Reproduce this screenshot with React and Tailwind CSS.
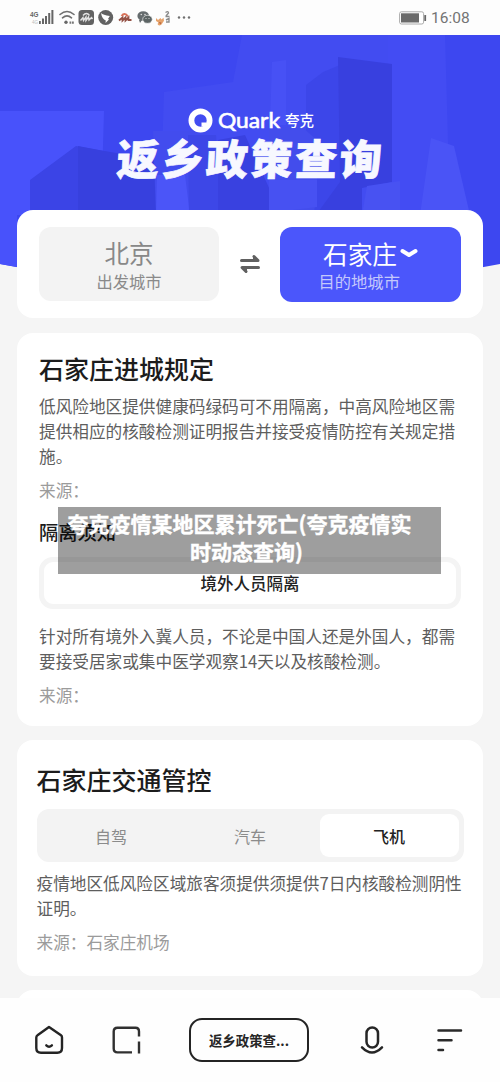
import React from "react";

const cjk = "font-['Noto_Sans_CJK_SC',sans-serif]";

function StatusBar() {
  return (
    <header className="flex h-[35px] shrink-0 items-center justify-between bg-[#fdfdfd] pl-[29px] pr-[31px]">
      <svg width="164" height="20" viewBox="29 8 164 20" className="block">
        <text x="30" y="16.500" fontSize="8" fontWeight="700" fill="#666" fontFamily="Liberation Sans" textLength="8.500" lengthAdjust="spacingAndGlyphs">4G</text>
        <text x="32" y="23.500" fontSize="4.500" fill="#bbb" fontFamily="Liberation Sans">4G</text>
        <g fill="#666">
          <rect x="39" y="21" width="1.8" height="3" />
          <rect x="42" y="18.5" width="2" height="5.5" />
          <rect x="45" y="16" width="2" height="8" />
          <rect x="48.2" y="13" width="2" height="11" />
          <rect x="51.4" y="10" width="2" height="14" />
        </g>
        <g fill="none" stroke="#707070" strokeWidth="1.6" strokeLinecap="round">
          <path d="M60 14.5q7-6 14 0" />
          <path d="M62.5 17.8q4.500-4 9 0" />
        </g>
        <circle cx="66" cy="22.200" r="1.700" fill="#666" />
        <path d="M69.500 22.700h5" stroke="#777" strokeWidth="2.200" strokeDasharray="1.800 .7" />
        <rect x="78.500" y="10" width="15.500" height="15" rx="3.500" fill="#626262" />
        <path d="M80.500 20.500l2.500-3 .5 3 2.500-3.500v3.500l2.500-3.500.5 3 2.500-2.500 1 1.500M83 15.500q3.500-4 6.500 0" fill="none" stroke="#e4e4e4" strokeWidth="1.400" />
        <circle cx="105.700" cy="17.500" r="7.500" fill="#626262" />
        <path d="M101 13q2 2 8.800 3l-1.800 3 1 .5-3.500 3.500.3-2.500q-3.800-1.500-4.800-7.500z" fill="#fff" />
        <path d="M121.500 16q3-4 6.500.3" fill="none" stroke="#d9735a" strokeWidth="2" />
        <path d="M119 20.500l3.500-3v3l3-3v3l3-3v2.500h3" fill="none" stroke="#935044" strokeWidth="1.800" />
        <ellipse cx="143.200" cy="16" rx="5.800" ry="4.800" fill="#666c6e" />
        <ellipse cx="147.500" cy="19.300" rx="4.800" ry="4" fill="#5c6464" stroke="#fff" strokeWidth=".6" />
        <path d="M140 23l2-3h-3z" fill="#666c6e" />
        <g fill="#ddd"><circle cx="141.300" cy="14.500" r=".8" /><circle cx="145" cy="14.500" r=".8" /><circle cx="146" cy="18.500" r=".6" /><circle cx="149" cy="18.500" r=".6" /></g>
        <path d="M156 18l2 2 2.500-2 1 1.500 2-1.700.5 3-2.500 3.700q-3 2-4-.5l1-1.500-2.500-1.500z" fill="#e6a36c" />
        <path d="M158.500 22l3 .5-1 2z" fill="#b9683f" />
        <path d="M165.500 12.500q3-2 3 .5l-2.500 3M165.500 16.500h4M166 20l3-1.500v3.500h-3" fill="none" stroke="#8c8c8c" strokeWidth="1.400" />
        <g fill="#707070"><circle cx="179" cy="17.500" r="1.200" /><circle cx="184" cy="17.500" r="1.200" /><circle cx="189" cy="17.500" r="1.200" /></g>
      </svg>
      <div className="flex items-center gap-[4px]">
        <svg width="28" height="14" viewBox="0 0 28 14" className="block">
          <rect x=".6" y=".8" width="24" height="12.200" rx="1.800" fill="#fff" stroke="#aaa" strokeWidth="1" />
          <rect x="2" y="2.300" width="18" height="9.200" fill="#6a6a6a" />
          <rect x="25.300" y="4" width="1.800" height="6" rx=".5" fill="#666" />
        </svg>
        <span className="w-[38px] whitespace-nowrap font-[Roboto,sans-serif] text-[15.500px] leading-[20px] text-[#747474]">16:08</span>
      </div>
    </header>
  );
}

function Skyline() {
  return (
    <svg className="absolute inset-x-0 top-0 block" width="500" height="250" viewBox="0 35 500 250">
      <path d="M0 35H500V264L250 310L0 264z" fill="#3d47f0" />
      <path d="M242 35H388L394 215H160L164 92L233 82z" fill="#424cf1" />
      <path d="M388 35H445L450 215H388z" fill="#434cf3" />
      <path d="M0 111H104L101 215H17V267L0 264z" fill="#4852fb" />
      <path d="M30 180L76 146L104 151L156 160V215H30z" fill="#3b44e6" />
      <path d="M78 146L104 151L156 160V215H78z" fill="#3740de" />
      <path d="M153 131H205L220 170L218 215H156z" fill="#424cee" />
      <path d="M157 175H185L190 215H156z" fill="#4b55f8" />
      <path d="M188 135H216L222 215H189z" fill="#3d47e7" />
      <path d="M218 140L245 135L270 190V215H218z" fill="#3941e0" />
      <path d="M272 62L286 60V125H270z" fill="#4751f5" />
      <path d="M306 85L323 72L340 65V215H306z" fill="#3c46e9" />
      <path d="M338 57L392 64V182L362 188V215H316L340 182z" fill="#3840df" />
      <path d="M269 130L300 125L320 143L314 215H269z" fill="#434dec" />
      <path d="M269 180H317V207L285 211V215H269z" fill="#4751f2" />
      <path d="M367 186L400 181V215H362z" fill="#4852f2" />
      <path d="M431 138L454 146L470 215H420z" fill="#4a54f6" />
    </svg>
  );
}

function Hero() {
  return (
    <section className="relative h-[175px] shrink-0">
      <Skyline />
      <div className="relative flex flex-col items-center pt-[72px]">
        <div className="flex h-[26px] items-center pl-[2px]">
          <svg width="25" height="25" viewBox="0 0 25 25" className="mr-[5px] block">
            <circle cx="12.500" cy="12.500" r="9.100" fill="none" stroke="#fff" strokeWidth="5.800" />
            <path d="M13.500 14.500h5v4h-5z" fill="#fff" />
          </svg>
          <svg width="67" height="26" viewBox="0 0 67 26" className="block">
            <text x="0" y="20.800" fontFamily="Lato, sans-serif" fontSize="20.500" fill="#fff" stroke="#fff" strokeWidth=".6" textLength="62" lengthAdjust="spacingAndGlyphs">Quark</text>
          </svg>
          <span className={`${cjk} text-[14.500px] font-medium leading-[26px] text-white`}>夸克</span>
        </div>
        <h1 className={`${cjk} -mt-[5px] -skew-x-[3deg] whitespace-nowrap pl-[2px] text-[42px] font-black leading-[58px] tracking-[2.600px] text-[#f7f8ff] [-webkit-text-stroke:.7px_#f7f8ff]`}>返乡政策查询</h1>
      </div>
    </section>
  );
}

function RouteCard() {
  return (
    <section className="relative mb-[1px] flex h-[108px] shrink-0 items-start justify-between rounded-[16px] bg-white px-[22px] pt-[17px]">
      <div className="flex h-[74px] w-[180px] flex-col items-center rounded-[12px] bg-[#f3f3f3] pt-[11px]">
        <div className="text-[24.500px] leading-[30px] text-[#888]">北京</div>
        <div className="text-[16.300px] leading-[27px] text-[#8a8a8a]">出发城市</div>
      </div>
      <svg width="22" height="22" viewBox="0 0 22 22" className="mt-[26px] block">
        <g fill="none" stroke="#606060" strokeWidth="3" strokeLinecap="round" strokeLinejoin="round">
          <path d="M2.500 7.500H19L15 3.500" />
          <path d="M19.500 14.500H3L7 18.500" />
        </g>
        <path d="M14 2l6 6h-6zM8 20l-6-6h6z" fill="#606060" />
      </svg>
      <div className="flex h-[75px] w-[181px] flex-col items-center rounded-[12px] bg-[#4b56fb] pt-[11px]">
        <div className="flex items-center gap-[3px] text-[24.700px] leading-[30px] text-white">
          石家庄
          <svg width="18" height="11" viewBox="0 0 18 11" className="block">
            <path d="M2.500 3L9 7L15.500 3" fill="none" stroke="#fff" strokeWidth="4" strokeLinecap="round" strokeLinejoin="round" />
          </svg>
        </div>
        <div className="w-[104px] text-[16.300px] leading-[27px] text-[#c4c8fb]">目的地城市</div>
      </div>
    </section>
  );
}

function Caption() {
  return (
    <div className="absolute left-[41px] top-[174px] flex h-[67px] w-[383px] flex-col items-center bg-black/38 text-[21px] font-bold leading-[28px] text-white [-webkit-text-stroke:.4px_#fff]">
      <span className="mt-[2px] -translate-x-[10px] whitespace-nowrap">夸克疫情某地区累计死亡(夸克疫情实</span>
      <span className="-translate-x-[3px] whitespace-nowrap">时动态查询)</span>
    </div>
  );
}

const bodyText = "whitespace-nowrap text-[16.650px] leading-[25px] text-[#5e5e5e]";
const sourceText = "text-[16.650px] leading-[25px] text-[#9b9b9b]";

function RulesCard() {
  return (
    <section className="relative h-[393px] shrink-0 rounded-[16px] bg-white px-[22px] pt-[17px]">
      <h2 className="text-[25px] font-medium leading-[36px] text-[#1c1c1c]">石家庄进城规定</h2>
      <p className={`mt-[8px] ${bodyText}`}>
        低风险地区提供健康码绿码可不用隔离，中高风险地区需
        <br />
        提供相应的核酸检测证明报告并接受疫情防控有关规定措
        <br />
        施。
      </p>
      <p className={`mt-[9px] ${sourceText}`}>来源：</p>
      <h3 className="mt-[15px] text-[19.300px] font-medium leading-[28px] text-[#1c1c1c]">隔离须知</h3>
      <div className="mt-[11px] flex h-[52px] items-center justify-center rounded-[14px] border-[5px] border-[#f4f4f4] bg-white text-[16.500px] font-medium text-[#222]">境外人员隔离</div>
      <p className={`mt-[15px] ${bodyText}`}>
        针对所有境外入冀人员，不论是中国人还是外国人，都需
        <br />
        要接受居家或集中医学观察14天以及核酸检测。
      </p>
      <p className={`mt-[9px] ${sourceText}`}>来源：</p>
      <Caption />
    </section>
  );
}

function TrafficCard() {
  return (
    <section className="h-[236px] shrink-0 rounded-[16px] bg-white px-[19.500px] pt-[21px]">
      <h2 className="text-[25px] font-medium leading-[36px] text-[#1c1c1c]">石家庄交通管控</h2>
      <div className="mt-[12px] grid h-[53px] grid-cols-3 rounded-[12px] bg-[#f3f3f3] p-[5px] text-[16px] text-[#8b8b8b]">
        <div className="flex items-center justify-center">自驾</div>
        <div className="flex items-center justify-center">汽车</div>
        <div className="flex items-center justify-center rounded-[9px] bg-white font-medium text-[#222]">飞机</div>
      </div>
      <p className={`mt-[9px] ${bodyText}`}>
        疫情地区低风险区域旅客须提供须提供7日内核酸检测阴性
        <br />
        证明。
      </p>
      <p className={`mt-[9px] ${sourceText}`}>来源：石家庄机场</p>
    </section>
  );
}

function NavBar() {
  return (
    <nav className="flex h-[84px] shrink-0 items-start bg-[#fefefe] pl-[34px] pt-[20px]">
      <svg width="30" height="46" viewBox="34 1018 30 46" className="mr-[47px] block" fill="none" stroke="#242424" strokeWidth="2.400" strokeLinecap="round" strokeLinejoin="round">
        <path d="M49 1027L61 1035.300Q62 1036 62 1037.500V1048Q62 1052.700 57.300 1052.700H41Q36.300 1052.700 36.300 1048V1037.500Q36.300 1036 37.500 1035.200z" />
        <path d="M46.300 1045.300q2.700 2.700 5.600 0" />
      </svg>
      <svg width="32" height="46" viewBox="111 1018 32 46" className="mr-[46px] block" fill="none" stroke="#303030" strokeWidth="2.400">
        <path d="M139 1036.500V1031.500Q139 1027.700 135.500 1027.700H117.500Q113.700 1027.700 113.700 1031.500V1048.500Q113.700 1052.400 117.500 1052.400H132" />
        <path d="M139 1041.500V1053.500" />
      </svg>
      <div className="mr-[50px] flex h-[44px] w-[120px] items-center justify-center rounded-[13px] border-[2px] border-[#242424] text-[13.400px] font-bold text-[#262626]">返乡政策查...</div>
      <svg width="26" height="46" viewBox="359 1018 26 46" className="mr-[51px] block" fill="none" stroke="#262626" strokeWidth="2.500" strokeLinecap="round">
        <rect x="366.500" y="1027.500" width="11.500" height="20" rx="5.750" />
        <path d="M362 1047.300Q372 1057.500 382 1047.300" />
      </svg>
      <svg width="28" height="46" viewBox="436 1018 28 46" className="block" stroke="#2a2a2a" strokeWidth="2.500" strokeLinecap="round">
        <path d="M438.500 1030.500H461M438.500 1040.300H451.500M438.500 1050H443" />
      </svg>
    </nav>
  );
}

export default function App() {
  return (
    <div className={`${cjk} flex h-[1082px] w-[500px] flex-col overflow-hidden bg-[#f5f5f5]`} lang="zh-CN">
      <StatusBar />
      <Hero />
      <main className="flex h-[788px] shrink-0 flex-col gap-[14px] overflow-hidden px-[17px]">
        <RouteCard />
        <RulesCard />
        <TrafficCard />
        <section className="h-[40px] shrink-0 rounded-[16px] bg-white" />
      </main>
      <NavBar />
    </div>
  );
}
